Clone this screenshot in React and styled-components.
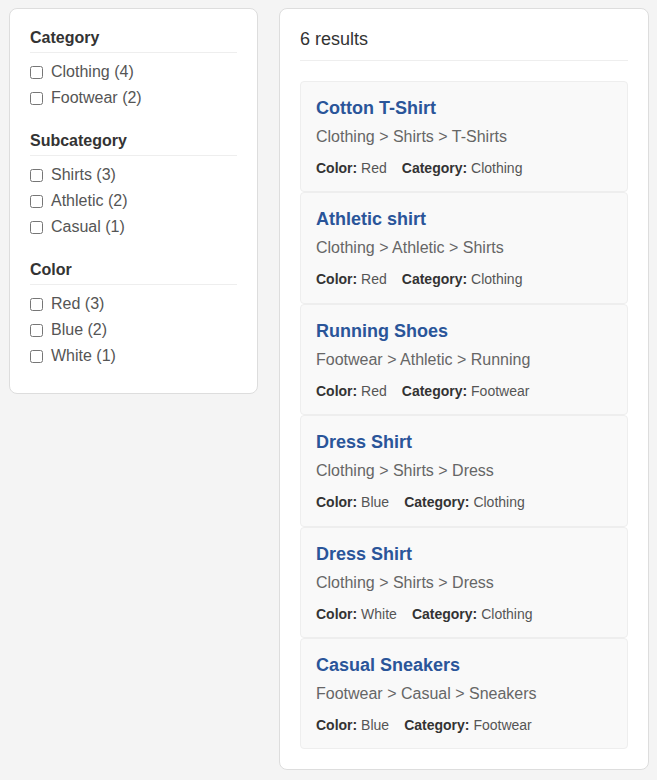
import React from 'react';
import styled, { createGlobalStyle } from 'styled-components';

const GlobalStyle = createGlobalStyle`
  body {
    margin: 8px 8px 8px 9px;
    background: #f4f4f4;
    font-family: "Liberation Sans", Arial, sans-serif;
    color: #333;
  }
`;

const Layout = styled.div`
  display: flex;
  gap: 21px;
  align-items: flex-start;
`;

const Panel = styled.div`
  background: #fff;
  border: 1px solid #ddd;
  border-radius: 8px;
  padding: 20px;
`;

const Sidebar = styled(Panel)`
  width: 249px;
  box-sizing: border-box;
  flex-shrink: 0;
`;

const Main = styled(Panel)`
  flex: 1;
  min-width: 0;
`;

const FilterGroup = styled.div`
  margin-bottom: 25px;
  &:last-child {
    margin-bottom: 0;
  }
`;

const GroupTitle = styled.h3`
  font-size: 16px;
  font-weight: bold;
  line-height: 18px;
  margin: 0 0 10px;
  padding-bottom: 5px;
  border-bottom: 1px solid #eee;
  color: #333;
`;

const Option = styled.label`
  display: flex;
  align-items: center;
  font-size: 16px;
  line-height: 18px;
  color: #555;
  margin-bottom: 8px;
  cursor: pointer;

  input {
    margin: 0 8px 0 0;
    width: 13px;
    height: 13px;
  }
`;

const ResultsHeader = styled.div`
  font-size: 18px;
  line-height: 21px;
  color: #333;
  padding-bottom: 10px;
  border-bottom: 1px solid #eee;
  margin-bottom: 20px;
`;

const Card = styled.div`
  background: #f9f9f9;
  border: 1px solid #eee;
  border-radius: 4px;
  padding: 16px 15px 15.4px;
`;

const CardTitle = styled.h2`
  font-size: 18px;
  line-height: 21px;
  font-weight: bold;
  color: #2a5599;
  margin: 0 0 9px;
`;

const Breadcrumb = styled.div`
  font-size: 16px;
  line-height: 18px;
  color: #666;
  margin-bottom: 14px;
`;

const Meta = styled.div`
  font-size: 14px;
  line-height: 16px;
  color: #555;

  span {
    margin-right: 15px;
  }
  b {
    color: #333;
  }
`;

const filters = [
  { title: 'Category', options: ['Clothing (4)', 'Footwear (2)'] },
  { title: 'Subcategory', options: ['Shirts (3)', 'Athletic (2)', 'Casual (1)'] },
  { title: 'Color', options: ['Red (3)', 'Blue (2)', 'White (1)'] },
];

const results = [
  { name: 'Cotton T-Shirt', path: 'Clothing > Shirts > T-Shirts', color: 'Red', category: 'Clothing' },
  { name: 'Athletic shirt', path: 'Clothing > Athletic > Shirts', color: 'Red', category: 'Clothing' },
  { name: 'Running Shoes', path: 'Footwear > Athletic > Running', color: 'Red', category: 'Footwear' },
  { name: 'Dress Shirt', path: 'Clothing > Shirts > Dress', color: 'Blue', category: 'Clothing' },
  { name: 'Dress Shirt', path: 'Clothing > Shirts > Dress', color: 'White', category: 'Clothing' },
  { name: 'Casual Sneakers', path: 'Footwear > Casual > Sneakers', color: 'Blue', category: 'Footwear' },
];

export default function App() {
  return (
    <>
      <GlobalStyle />
      <Layout>
        <Sidebar>
          {filters.map((group) => (
            <FilterGroup key={group.title}>
              <GroupTitle>{group.title}</GroupTitle>
              {group.options.map((opt) => (
                <Option key={opt}>
                  <input type="checkbox" />
                  {opt}
                </Option>
              ))}
            </FilterGroup>
          ))}
        </Sidebar>
        <Main>
          <ResultsHeader>{results.length} results</ResultsHeader>
          {results.map((item, i) => (
            <Card key={i}>
              <CardTitle>{item.name}</CardTitle>
              <Breadcrumb>{item.path}</Breadcrumb>
              <Meta>
                <span><b>Color:</b> {item.color}</span>
                <span><b>Category:</b> {item.category}</span>
              </Meta>
            </Card>
          ))}
        </Main>
      </Layout>
    </>
  );
}
